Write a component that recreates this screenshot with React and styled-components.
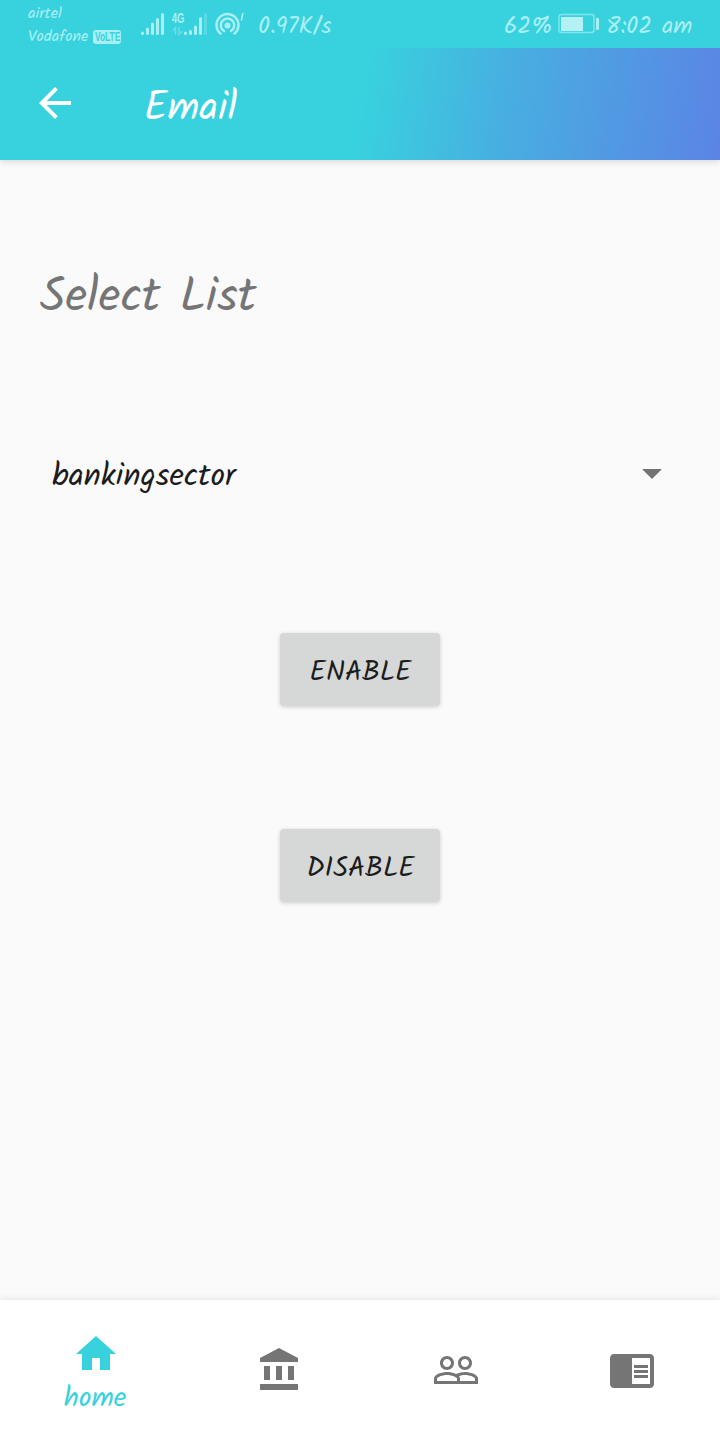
import React from 'react';
import styled, { createGlobalStyle } from 'styled-components';

const GlobalStyle = createGlobalStyle`
  *, *::before, *::after { box-sizing: border-box; }
  body { margin: 0; background: #fafafa; }
  button { font: inherit; border: 0; padding: 0; background: none; }
  svg { display: block; flex: none; }
`;

const Screen = styled.div`
  width: 720px;
  height: 1440px;
  display: flex;
  flex-direction: column;
  overflow: hidden;
  background: #fafafa;
  font-family: 'Kalam', 'Lato', sans-serif;
  font-weight: 400;
`;

/* One line of handwritten text. */
const Label = styled.span`
  display: block;
  flex: none;
  white-space: nowrap;
  color: ${(p) => p.$color || 'inherit'};
  font-size: ${(p) => p.$size}px;
  line-height: ${(p) => p.$line || p.$size * 1.2}px;
`;

const StatusBar = styled.header`
  height: 48px;
  flex: none;
  position: relative;
  z-index: 1;
  display: flex;
  align-items: center;
  justify-content: space-between;
  padding: 0 28px;
  background: #38d2de;
  color: #a9eff2;
`;

const StatusGroup = styled.div`
  display: flex;
  align-items: center;
`;

const Carriers = styled.div`
  width: 112px;
  height: 48px;
  display: flex;
  flex-direction: column;
  padding-top: 2px;
`;

const CarrierRow = styled.div`
  height: 23px;
  display: flex;
  align-items: center;
`;

const VolteBadge = styled.span`
  width: 28px;
  height: 14px;
  margin-left: 5px;
  border-radius: 3px;
  display: flex;
  align-items: center;
  justify-content: center;
  background: #a9eff2;
  color: #38d2de;
  font: bold 13px/14px 'Liberation Sans', sans-serif;

  span { transform: scaleX(0.64); }
`;

const Speed = styled.div`
  margin-left: 14px;
  padding-top: 5px;
`;

const Percent = styled.div`
  width: 54px;
  padding-top: 5px;
`;

const Clock = styled.div`
  width: 86px;
  margin-left: 7px;
  padding-top: 5px;
`;

const AppBar = styled.div`
  height: 112px;
  flex: none;
  position: relative;
  display: flex;
  align-items: center;
  padding: 0 31px;
  background: linear-gradient(99deg, #38d2de 0%, #38d2de 50%, #48aee1 70%, #5b84e5 100%);
  box-shadow: 0 1px 7px rgba(0, 0, 0, 0.16);
  color: #fff;
`;

const BackButton = styled.button`
  width: 48px;
  height: 48px;
  margin: 0 65px 2px 0;
  color: inherit;
`;

const Title = styled.h1`
  margin: 0;
  padding-top: 10px;
  font: inherit;
`;

const Content = styled.main`
  flex: 1;
  display: flex;
  flex-direction: column;
  padding: 108px 40px 0;
`;

const Select = styled.div`
  height: 60px;
  margin-top: 116px;
  padding: 0 18px 0 12px;
  display: flex;
  align-items: center;
  justify-content: space-between;

  > span { padding-top: 7px; }
`;

const Actions = styled.div`
  display: flex;
  flex-direction: column;
  align-items: center;
  gap: 123px;
  margin-top: 129px;
`;

const ActionButton = styled.button`
  width: 160px;
  height: 73px;
  display: flex;
  align-items: center;
  justify-content: center;
  padding: 7px 0 0 1px;
  border-radius: 4px;
  background: #d6d8d7;
  box-shadow: 0 1px 4px rgba(0, 0, 0, 0.18);
  color: #1c1c1c;
`;

const BottomNav = styled.nav`
  height: 140px;
  flex: none;
  display: flex;
  background: #fff;
  box-shadow: 0 0 8px rgba(0, 0, 0, 0.11);
`;

const NavItem = styled.a`
  width: ${(p) => (p.$active ? 192 : 176)}px;
  display: flex;
  flex-direction: column;
  align-items: center;
  gap: 4px;
  padding-top: ${(p) => (p.$active ? 30 : 46)}px;
  color: ${(p) => (p.$active ? '#38d2de' : '#757575')};

  > span { padding-right: 2px; }
`;

const MaterialIcon = ({ path }) => (
  <svg width="48" height="48" viewBox="0 0 24 24" fill="currentColor">
    <path d={path} />
  </svg>
);

const icons = {
  back: 'M20 11H7.83l5.59-5.59L12 4l-8 8 8 8 1.41-1.41L7.83 13H20v-2z',
  home: 'M10 20v-6h4v6h5v-8h3L12 3 2 12h3v8z',
  bank: 'M4 10v7h3v-7H4zm6 0v7h3v-7h-3zM2 22h19v-3H2v3zm14-12v7h3v-7h-3zm-4.5-9L2 6v2h19V6l-9.5-5z',
  people:
    'M16.5 13c-1.2 0-3.07.34-4.5 1-1.43-.67-3.3-1-4.5-1C5.33 13 1 14.08 1 16.25V19h22v-2.75c0-2.17-4.33-3.25-6.5-3.25zm-4 4.5h-10v-1.25c0-.54 2.56-1.75 5-1.75s5 1.21 5 1.75v1.25zm9 0H14v-1.25c0-.46-.2-.86-.52-1.22.88-.3 1.96-.53 3.02-.53 2.44 0 5 1.21 5 1.75v1.25zM7.5 12c1.93 0 3.5-1.57 3.5-3.5S9.43 5 7.5 5 4 6.57 4 8.5 5.57 12 7.5 12zm0-5.5c1.1 0 2 .9 2 2s-.9 2-2 2-2-.9-2-2 .9-2 2-2zm9 5.5c1.93 0 3.5-1.57 3.5-3.5S18.43 5 16.5 5 13 6.57 13 8.5s1.57 3.5 3.5 3.5zm0-5.5c1.1 0 2 .9 2 2s-.9 2-2 2-2-.9-2-2 .9-2 2-2z',
  reader:
    'M13 12h7v1.5h-7zm0-2.5h7V11h-7zm0 5h7V16h-7zM21 4H3c-1.1 0-2 .9-2 2v13c0 1.1.9 2 2 2h18c1.1 0 2-.9 2-2V6c0-1.1-.9-2-2-2zm0 15h-9V6h9v13z',
};

const SignalBars = () => (
  <svg width="25" height="48" viewBox="0 0 25 48" stroke="currentColor" strokeWidth="3" strokeLinecap="round">
    <path d="M2.5 33v0.5M7.5 29v4.5M12.5 24v9.5M17.5 19.5v14M22.5 14.5v19" />
  </svg>
);

const NetworkIcon = styled.div`
  width: 37px;
  height: 48px;
  margin-left: 6px;
  display: grid;

  > * { grid-area: 1 / 1; }
  > span {
    font: bold 14px/15px 'Liberation Sans', sans-serif;
    padding: 11px 0 0 1px;
    width: 20px;
    transform: scaleX(0.68);
    transform-origin: left center;
  }
`;

const DataSignal = () => (
  <NetworkIcon>
    <span>4G</span>
    <svg width="37" height="48" viewBox="0 0 37 48" fill="none" stroke="currentColor" strokeWidth="3" strokeLinecap="round">
      <path d="M14.5 33v0.5M19.5 31.5v2M24.5 27v6.5M29.5 18.5v15" />
      <path d="M34.5 14.5v19" opacity="0.3" />
      <path d="M2 30.5l2.5-3v7M8 27.5v7l3-3" strokeWidth="1.5" opacity="0.4" />
    </svg>
  </NetworkIcon>
);

const HotspotIcon = () => (
  <svg width="36" height="48" viewBox="-6 0 36 48" fill="none" stroke="currentColor" strokeWidth="2.5" strokeLinecap="round">
    <circle cx="13.5" cy="25.5" r="3" fill="currentColor" stroke="none" />
    <path d="M10 31a6.7 6.7 0 1 1 7 0M6.5 33.5a11 11 0 1 1 14 0" />
    <path d="M28.8 13.5L27.5 20" strokeWidth="1.5" />
  </svg>
);

const BatteryIcon = () => (
  <svg width="41" height="22" viewBox="0 0 41 22" fill="none">
    <rect x="1" y="1.5" width="35" height="18" rx="2.5" stroke="#83e5eb" strokeWidth="1.5" />
    <rect x="3" y="4" width="22" height="14" fill="#b4f1f2" />
    <rect x="38" y="5" width="3" height="12" rx="1" fill="#a9eff2" />
  </svg>
);

const Caret = () => (
  <svg width="20" height="10" viewBox="0 0 20 10" fill="#737373">
    <path d="M0 0h20L10 10z" />
  </svg>
);

export default function App() {
  return (
    <Screen>
      <GlobalStyle />
      <StatusBar>
        <StatusGroup>
          <Carriers>
            <CarrierRow><Label $size={16}>airtel</Label></CarrierRow>
            <CarrierRow>
              <Label $size={16}>Vodafone</Label>
              <VolteBadge><span>VoLTE</span></VolteBadge>
            </CarrierRow>
          </Carriers>
          <SignalBars />
          <DataSignal />
          <HotspotIcon />
          <Speed><Label $size={24} $line={29}>0.97K/s</Label></Speed>
        </StatusGroup>
        <StatusGroup>
          <Percent><Label $size={24} $line={29}>62%</Label></Percent>
          <BatteryIcon />
          <Clock><Label $size={24} $line={29}>8:02 am</Label></Clock>
        </StatusGroup>
      </StatusBar>
      <AppBar>
        <BackButton aria-label="Back"><MaterialIcon path={icons.back} /></BackButton>
        <Title><Label $size={40}>Email</Label></Title>
      </AppBar>
      <Content>
        <Label $size={48} $line={60} $color="#757575">Select List</Label>
        <Select>
          <Label $size={32} $color="#1c1c1c">bankingsector</Label>
          <Caret />
        </Select>
        <Actions>
          <ActionButton><Label $size={28}>ENABLE</Label></ActionButton>
          <ActionButton><Label $size={28}>DISABLE</Label></ActionButton>
        </Actions>
      </Content>
      <BottomNav>
        <NavItem $active>
          <MaterialIcon path={icons.home} />
          <Label $size={28}>home</Label>
        </NavItem>
        <NavItem><MaterialIcon path={icons.bank} /></NavItem>
        <NavItem><MaterialIcon path={icons.people} /></NavItem>
        <NavItem><MaterialIcon path={icons.reader} /></NavItem>
      </BottomNav>
    </Screen>
  );
}
